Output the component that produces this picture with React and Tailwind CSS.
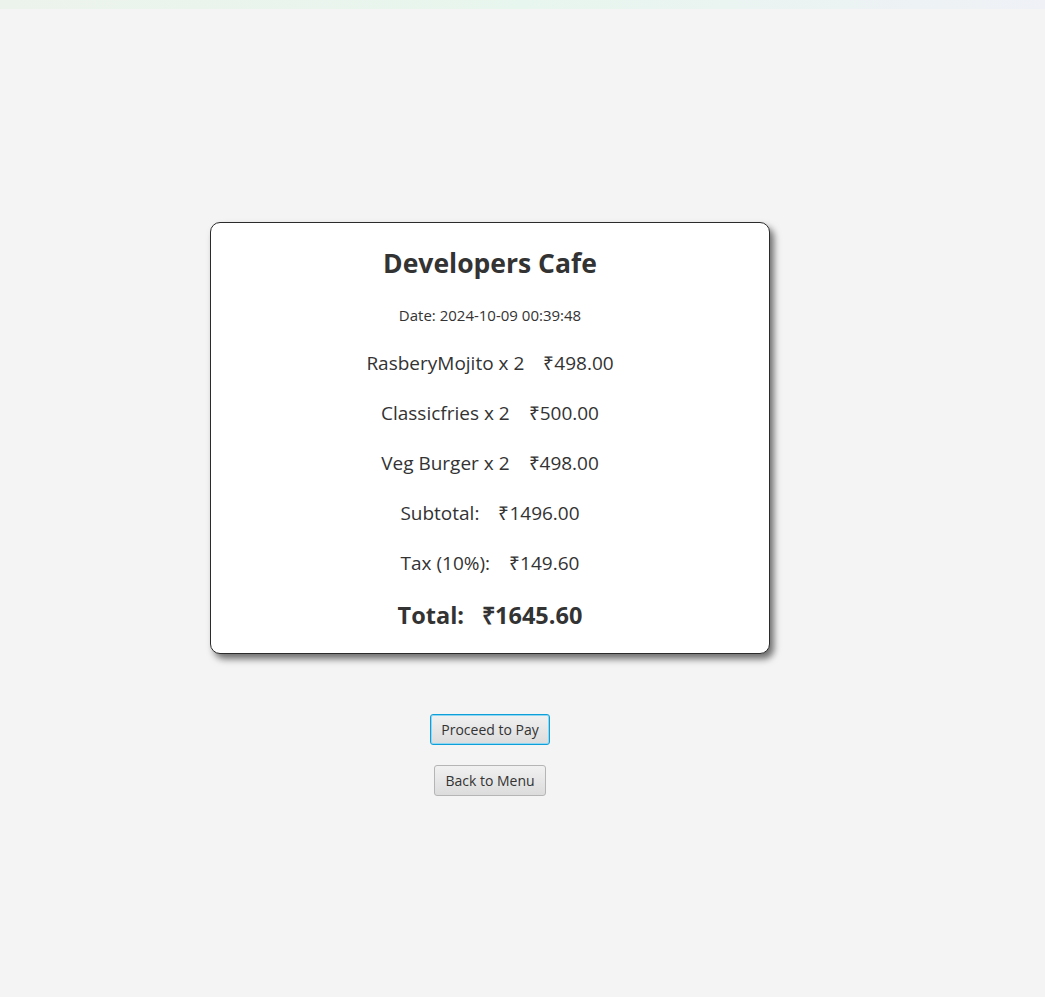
export default function App() {
  const items = [
    ['RasberyMojito x 2', '₹498.00'],
    ['Classicfries x 2', '₹500.00'],
    ['Veg Burger x 2', '₹498.00'],
  ];

  return (
    <div className="min-h-[997px] w-full bg-[#f4f4f4] text-[#333333] font-['Open_Sans',sans-serif]">
      {/* top strip */}
      <div className="h-[9px] w-full bg-gradient-to-r from-[#ecf3ec] via-[#e7f6ee] to-[#eff1f6]" />

      <div className="flex flex-col items-center pt-[213px]">
        {/* receipt card */}
        <div className="ml-[-65px] flex h-[432px] w-[560px] flex-col items-center rounded-[10px] border border-[#2b2b2b] bg-white pt-[20px] shadow-[4px_5px_7px_rgba(0,0,0,0.55)]">
          <h1 className="text-[26.5px] font-bold leading-[40px]">Developers Cafe</h1>
          <p className="mt-[22px] text-[15px] leading-[20px]">Date: 2024-10-09 00:39:48</p>

          <div className="mt-[24px] flex flex-col items-center gap-[22px] text-[19px] leading-[28px]">
            {items.map(([name, price]) => (
              <div key={name} className="flex gap-[19px]">
                <span>{name}</span>
                <span>{price}</span>
              </div>
            ))}
            <div className="flex gap-[19px]">
              <span>Subtotal:</span>
              <span>₹1496.00</span>
            </div>
            <div className="flex gap-[19px]">
              <span>Tax (10%):</span>
              <span>₹149.60</span>
            </div>
          </div>

          <div className="mt-[23px] flex gap-[18px] text-[23.5px] font-bold leading-[30px]">
            <span>Total:</span>
            <span>₹1645.60</span>
          </div>
        </div>

        {/* buttons */}
        <div className="ml-[-65px] mt-[60px] flex flex-col items-center gap-[20px] text-[14px]">
          <button className="h-[31px] rounded-[3px] border border-[#0e9ed8] bg-gradient-to-b from-[#f1f1f1] to-[#dcdcdc] px-[10px] shadow-[inset_0_0_0_1px_#8ed6f2]">
            Proceed to Pay
          </button>
          <button className="h-[31px] rounded-[3px] border border-[#b5b5b5] bg-gradient-to-b from-[#f1f1f1] to-[#dcdcdc] px-[10px]">
            Back to Menu
          </button>
        </div>
      </div>
    </div>
  );
}
